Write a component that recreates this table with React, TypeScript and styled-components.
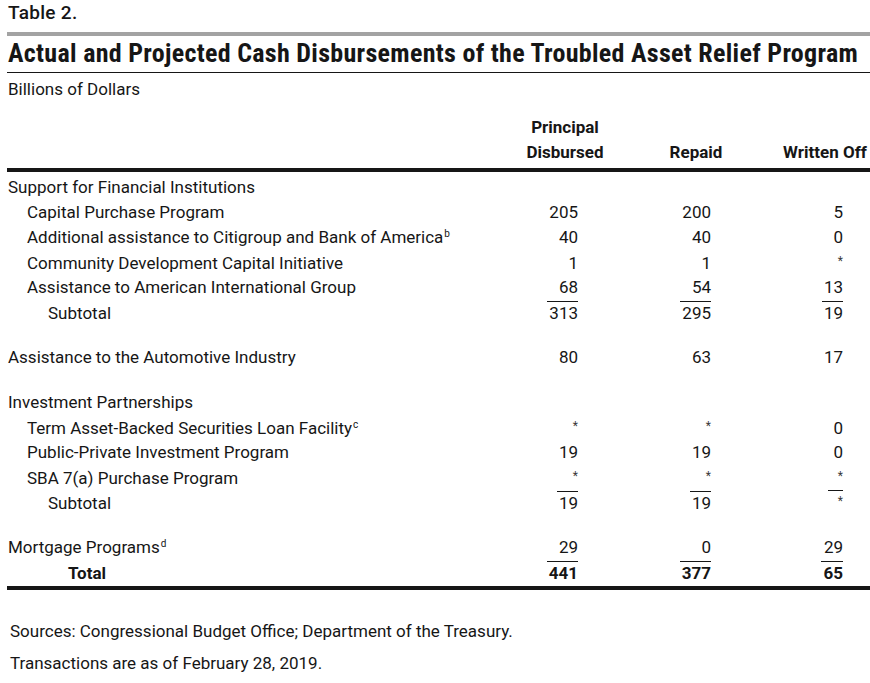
import styled, { createGlobalStyle } from "styled-components"

const GlobalStyle = createGlobalStyle`
  body {
    margin: 0;
    background: #ffffff;
    color: #161616;
    font-family: Roboto, "Liberation Sans", sans-serif;
  }
`

const Page = styled.div`
  width: 863px;
  padding-left: 7px;
`

const Caption = styled.div`
  padding: 2px 0 0 1px;
  font-size: 19px;
  line-height: 22px;
  font-weight: 500;
  font-stretch: 92%;
  letter-spacing: 0.3px;
`

const GrayRule = styled.div`
  margin-top: 8px;
  height: 4px;
  background: #a3a3a3;
`

const Title = styled.h1`
  margin: 1px 0 0 1px;
  font-size: 26px;
  line-height: 32px;
  font-weight: 700;
  font-stretch: 86%;
  letter-spacing: 0.3px;
  white-space: nowrap;
`

const ThinRule = styled.div`
  margin-top: 3px;
  height: 1px;
  background: #161616;
`

const Units = styled.div`
  padding: 5px 0 0 1px;
  font-size: 17px;
  line-height: 22px;
`

const ThickRule = styled.div`
  height: 4px;
  background: #161616;
`

const HeadRow = styled.div`
  display: grid;
  grid-template-columns: 1fr 94px 168px 90px;
  align-items: end;
  height: 68px;
  padding-bottom: 3px;
  box-sizing: border-box;
`

const HeadCell = styled.div`
  font-size: 17px;
  line-height: 25px;
  font-weight: 700;
  text-align: center;
  white-space: nowrap;
`

const Body = styled.div`
  padding: 2px 0 1px;
`

const Row = styled.div<{ $gap?: boolean }>`
  display: grid;
  grid-template-columns: 1fr 94px 168px 90px;
  align-items: center;
  height: 25.2px;
  margin-top: ${p => (p.$gap ? "19.5px" : "0")};
  font-size: 17px;
`

const Label = styled.div<{ $level: number; $bold?: boolean }>`
  padding-left: ${p => [1, 20, 41, 61][p.$level]}px;
  font-weight: ${p => (p.$bold ? 700 : 400)};
  white-space: nowrap;
`

const Sup = styled.sup`
  font-size: 10px;
  line-height: 0;
  margin-left: 1px;
  vertical-align: 6px;
`

const Cell = styled.div<{ $pad: number }>`
  text-align: right;
  padding-right: ${p => p.$pad}px;
`

const Value = styled.span<{ $rule?: boolean; $bold?: boolean }>`
  display: inline-block;
  line-height: 23px;
  padding-left: 2px;
  font-weight: ${p => (p.$bold ? 700 : 400)};
  border-top: 1px solid ${p => (p.$rule ? "#161616" : "transparent")};
`

const Star = styled.span`
  display: inline-block;
  min-width: 13px;
  text-align: right;
  font-size: 12px;
  color: #3a3a3a;
  transform: translateY(-3px);
`

const Notes = styled.div`
  padding: 25px 0 0 3px;
  font-size: 17px;
  line-height: 32px;
`

type Line = {
  label: string
  level: number
  sup?: string
  bold?: boolean
  gap?: boolean
  rule?: boolean
  values?: [string, string, string]
}

const PADS = [34, 69, 27]

const LINES: Line[] = [
  { label: "Support for Financial Institutions", level: 0 },
  { label: "Capital Purchase Program", level: 1, values: ["205", "200", "5"] },
  { label: "Additional assistance to Citigroup and Bank of America", sup: "b", level: 1, values: ["40", "40", "0"] },
  { label: "Community Development Capital Initiative", level: 1, values: ["1", "1", "*"] },
  { label: "Assistance to American International Group", level: 1, values: ["68", "54", "13"] },
  { label: "Subtotal", level: 2, rule: true, values: ["313", "295", "19"] },
  { label: "Assistance to the Automotive Industry", level: 0, gap: true, values: ["80", "63", "17"] },
  { label: "Investment Partnerships", level: 0, gap: true },
  { label: "Term Asset-Backed Securities Loan Facility", sup: "c", level: 1, values: ["*", "*", "0"] },
  { label: "Public-Private Investment Program", level: 1, values: ["19", "19", "0"] },
  { label: "SBA 7(a) Purchase Program", level: 1, values: ["*", "*", "*"] },
  { label: "Subtotal", level: 2, rule: true, values: ["19", "19", "*"] },
  { label: "Mortgage Programs", sup: "d", level: 0, gap: true, values: ["29", "0", "29"] },
  { label: "Total", level: 3, bold: true, rule: true, values: ["441", "377", "65"] }
]

const App = () => {
  return (
    <Page>
      <GlobalStyle />
      <Caption>Table 2.</Caption>
      <GrayRule />
      <Title>Actual and Projected Cash Disbursements of the Troubled Asset Relief Program</Title>
      <ThinRule />
      <Units>Billions of Dollars</Units>

      <HeadRow>
        <div />
        <HeadCell>
          Principal
          <br />
          Disbursed
        </HeadCell>
        <HeadCell>Repaid</HeadCell>
        <HeadCell>Written Off</HeadCell>
      </HeadRow>
      <ThickRule />

      <Body>
        {LINES.map((l, index) => (
          <Row key={index} $gap={l.gap}>
            <Label $level={l.level} $bold={l.bold}>
              {l.label}
              {l.sup && <Sup>{l.sup}</Sup>}
            </Label>
            {l.values &&
              l.values.map((v, i) => (
                <Cell key={i} $pad={PADS[i]}>
                  <Value $rule={l.rule} $bold={l.bold}>
                    {v === "*" ? <Star>*</Star> : v}
                  </Value>
                </Cell>
              ))}
          </Row>
        ))}
      </Body>
      <ThickRule />

      <Notes>
        <div>Sources: Congressional Budget Office; Department of the Treasury.</div>
        <div>Transactions are as of February 28, 2019.</div>
      </Notes>
    </Page>
  )
}

export default App
